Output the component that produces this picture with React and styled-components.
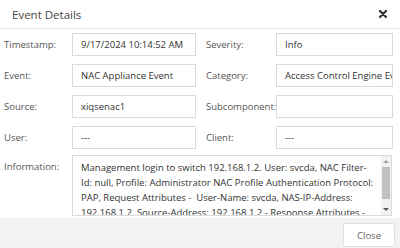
import styled, { createGlobalStyle } from "styled-components";

const GlobalStyle = createGlobalStyle`
  html, body {
    margin: 0;
    padding: 0;
    background: #fff;
  }
  body {
    font-family: "Open Sans", "Liberation Sans", sans-serif;
  }
`;

const fields = [
  { label: "Timestamp:", value: "9/17/2024 10:14:52 AM" },
  { label: "Severity:", value: "Info" },
  { label: "Event:", value: "NAC Appliance Event" },
  { label: "Category:", value: "Access Control Engine Event" },
  { label: "Source:", value: "xiqsenac1" },
  { label: "Subcomponent:", value: "" },
  { label: "User:", value: "---" },
  { label: "Client:", value: "---" },
];

// wrapped the way the dialog shows it
const infoLines = [
  "Management login to switch 192.168.1.2. User: svcda, NAC Filter-",
  "Id: null, Profile: Administrator NAC Profile Authentication Protocol:",
  "PAP, Request Attributes -  User-Name: svcda, NAS-IP-Address:",
  "192.168.1.2. Source-Address: 192.168.1.2 - Response Attributes -",
  "Filter-Id: Administrator",
];

const Dialog = styled.div`
  width: 400px;
  height: 248px;
  display: flex;
  flex-direction: column;
  overflow: hidden;
  background: #fff;
`;

const Header = styled.div`
  height: 28px;
  flex: none;
  display: flex;
  align-items: center;
  justify-content: space-between;
  padding: 0 12px;
  border-bottom: 1px solid #e5e5e5;
`;

const Title = styled.div`
  font-size: 11.5px;
  color: #444;
`;

const CloseIcon = styled.svg`
  width: 8px;
  height: 8px;
  margin-right: 1px;
  margin-top: -1px;
`;

const Body = styled.div`
  flex: 1;
  overflow: hidden;
  padding: 4px 0 0 4px;
`;

const Grid = styled.div`
  display: grid;
  grid-template-columns: 68px 124px 80px 117px;
  grid-auto-rows: 23px;
  row-gap: 8px;
  align-items: center;
`;

const Label = styled.div`
  font-size: 9.5px;
  color: #555;
  white-space: nowrap;
  padding-left: ${(p) => (p.$right ? "10px" : "0")};
  align-self: ${(p) => (p.$top ? "start" : "center")};
  padding-top: ${(p) => (p.$top ? "5px" : "0")};
`;

const Field = styled.div`
  height: 23px;
  box-sizing: border-box;
  border: 1px solid #dadada;
  padding: 0 8px;
  display: flex;
  align-items: center;
  font-size: 9.5px;
  color: #333;
  white-space: nowrap;
  overflow: hidden;
`;

const InfoRow = styled.div`
  display: grid;
  grid-template-columns: 68px 320px;
  margin-top: 6px;
`;

const InfoBox = styled.div`
  height: 61px;
  box-sizing: border-box;
  border: 1px solid #dadada;
  display: flex;
`;

const InfoText = styled.div`
  flex: 1;
  overflow: hidden;
  padding: 4px 4px 0 8px;
  font-size: 9.5px;
  line-height: 15px;
  color: #333;
`;

const Line = styled.div`
  white-space: pre;
`;

const ScrollBar = styled.div`
  width: 10px;
  flex: none;
  background: #f1f1f1;
  display: flex;
  flex-direction: column;
  align-items: center;
`;

const Arrow = styled.div`
  width: 0;
  height: 0;
  margin: 4px 0;
  border-left: 3px solid transparent;
  border-right: 3px solid transparent;
  ${(p) =>
    p.$down
      ? "border-top: 3px solid #555;"
      : "border-bottom: 3px solid #a3a3a3;"}
`;

const Thumb = styled.div`
  width: 8px;
  height: 32px;
  background: #c1c1c1;
`;

const Spacer = styled.div`
  flex: 1;
`;

const Footer = styled.div`
  height: 30px;
  flex: none;
  background: #f2f2f2;
  display: flex;
  justify-content: flex-end;
  align-items: flex-start;
  padding: 5px 5px 0 0;
  box-sizing: border-box;
`;

const Button = styled.button`
  width: 52px;
  height: 24px;
  background: #fff;
  border: 1px solid #e0e0e0;
  border-radius: 2px;
  font-family: inherit;
  font-size: 9.5px;
  color: #666;
  padding: 0;
`;

export default function App() {
  return (
    <>
      <GlobalStyle />
      <Dialog>
        <Header>
          <Title>Event Details</Title>
          <CloseIcon viewBox="0 0 8 8">
            <path d="M1 1L7 7M7 1L1 7" stroke="#333" strokeWidth="2.2" strokeLinecap="round" />
          </CloseIcon>
        </Header>
        <Body>
          <Grid>
            {fields.map((f, i) => [
              <Label key={f.label} $right={i % 2 === 1}>{f.label}</Label>,
              <Field key={f.label + "v"}>{f.value}</Field>,
            ])}
          </Grid>
          <InfoRow>
            <Label $top>Information:</Label>
            <InfoBox>
              <InfoText>
                {infoLines.map((l) => (
                  <Line key={l}>{l}</Line>
                ))}
              </InfoText>
              <ScrollBar>
                <Arrow />
                <Thumb />
                <Spacer />
                <Arrow $down />
              </ScrollBar>
            </InfoBox>
          </InfoRow>
        </Body>
        <Footer>
          <Button>Close</Button>
        </Footer>
      </Dialog>
    </>
  );
}
